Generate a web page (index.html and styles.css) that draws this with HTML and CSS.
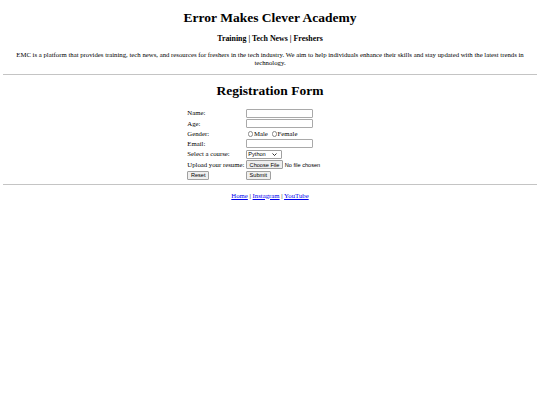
FILE: index.html
```html
<!DOCTYPE html>
<html lang="en">
<head>
<meta charset="utf-8">
<title>Error Makes Clever Academy</title>
<link rel="stylesheet" href="styles.css">
</head>
<body>
<header class="site-header">
  <h1 class="title title-top">Error Makes Clever Academy</h1>
  <h3 class="nav">Training | Tech News | Freshers</h3>
  <p class="intro">EMC is a platform that provides training, tech news, and resources for freshers in the tech industry. We aim to help individuals enhance their skills and stay updated with the latest trends in technology.</p>
</header>
<hr class="rule">
<main class="register">
  <h1 class="title">Registration Form</h1>
  <form class="reg-form">
    <table class="form-table">
      <tr><td>Name:</td><td><input class="field" type="text" name="name"></td></tr>
      <tr><td>Age:</td><td><input class="field" type="text" name="age"></td></tr>
      <tr><td>Gender:</td><td class="radios"><input class="radio" type="radio" name="gender" id="m"><label for="m">Male</label> <input class="radio" type="radio" name="gender" id="f"><label for="f">Female</label></td></tr>
      <tr><td>Email:</td><td><input class="field" type="email" name="email"></td></tr>
      <tr><td>Select a course:</td><td><span class="select-wrap"><select class="select" name="course"><option>Python</option><option>Java</option><option>C++</option></select><svg class="chev" viewBox="0 0 10 6" width="5" height="3"><path d="M1 1 L5 5 L9 1" fill="none" stroke="#000" stroke-width="1.6"/></svg></span></td></tr>
      <tr><td>Upload your resume:</td><td><span class="file"><span class="btn">Choose File</span><span class="file-name">No file chosen</span></span></td></tr>
      <tr><td><button class="btn" type="reset">Reset</button></td><td><button class="btn" type="submit">Submit</button></td></tr>
    </table>
  </form>
</main>
<hr class="rule">
<footer class="site-footer">
  <p class="links"><a href="#">Home</a> | <a href="#">Instagram</a> | <a href="#">YouTube</a></p>
</footer>
</body>
</html>
```

FILE: styles.css
```css
body {
  margin: 3.4px;
  font-family: "Liberation Serif", "Times New Roman", serif;
  font-size: 6.75px;
  line-height: 7.76px;
  background: #fff;
  color: #000;
}
.site-header,
.register,
.site-footer {
  text-align: center;
}
.title {
  font-size: 13.5px;
  line-height: 15.5px;
  margin: 8.4px 0;
}
.title-top {
  margin-top: 7px;
}
.nav {
  font-size: 7.9px;
  line-height: 9.1px;
  margin: 7.9px 0;
}
.intro,
.links {
  margin: 6.75px 0;
}
.rule {
  border: 0;
  border-top: 1px solid #c4c4c4;
  margin: 3.4px 0;
}
.reg-form {
  padding-top: 1px;
}
.form-table {
  margin: 0 auto;
  text-align: left;
  border-collapse: separate;
  border-spacing: 0;
}
.form-table td {
  padding: 0.85px;
  vertical-align: middle;
}
.field {
  box-sizing: border-box;
  width: 66.5px;
  height: 8.9px;
  margin: 0;
  padding: 0;
  border: 1px solid #a9a9a9;
  border-radius: 1px;
  background: #fff;
  font: 5.6px "Liberation Sans", Arial, sans-serif;
  display: block;
}
.radios {
  white-space: nowrap;
}
.radio {
  -webkit-appearance: none;
  appearance: none;
  box-sizing: border-box;
  width: 5.4px;
  height: 5.4px;
  margin: 1.3px 0.6px 0 2px;
  border: 0.7px solid #8a8a8a;
  border-radius: 50%;
  background: #fff;
  vertical-align: -0.6px;
}
.select-wrap {
  position: relative;
  display: inline-block;
  vertical-align: middle;
}
.select {
  -webkit-appearance: none;
  appearance: none;
  box-sizing: border-box;
  width: 35.5px;
  height: 8.2px;
  margin: 0;
  padding: 0 0 0 1.3px;
  border: 1px solid #a0a0a0;
  border-radius: 1px;
  background: #fff;
  color: #000;
  font: 5.6px "Liberation Sans", Arial, sans-serif;
  display: block;
}
.chev {
  position: absolute;
  right: 5px;
  top: 2.8px;
}
.file {
  display: flex;
  align-items: center;
  width: 106.7px;
  white-space: nowrap;
  font: 5.6px "Liberation Sans", Arial, sans-serif;
}
.file-name {
  margin-left: 1.7px;
}
.btn {
  box-sizing: border-box;
  display: inline-flex;
  align-items: center;
  height: 8.9px;
  margin: 0;
  padding: 0 2.6px;
  border: 1px solid #a0a0a0;
  border-radius: 1px;
  background: #efefef;
  color: #000;
  font: 5.6px "Liberation Sans", Arial, sans-serif;
}
a {
  color: #0000ee;
}
```
